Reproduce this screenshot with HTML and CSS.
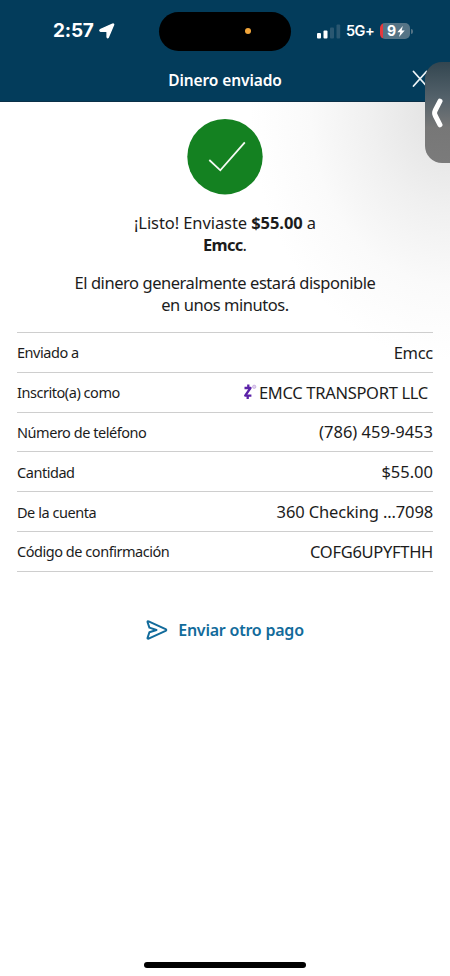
FILE: index.html
```html
<!DOCTYPE html>
<html lang="es">
<head>
<meta charset="utf-8">
<meta name="viewport" content="width=device-width, initial-scale=1">
<title>Dinero enviado</title>
<link rel="stylesheet" href="styles.css">
</head>
<body>
<div class="screen">
  <header class="top">
    <div class="status">
      <div class="clock"><span class="time">2:57</span>
        <svg class="location" width="16" height="16" viewBox="0 0 16 16"><path d="M1.3 6.6 13.6 1.1q1.4-.4.9 1L9.3 14.3q-.8 1-1.2-.2V9.2q0-.9-.9-.9H1.8Q.2 7.9 1.3 6.6Z" fill="#fff" stroke="#fff" stroke-width="1.4" stroke-linejoin="round"/></svg>
      </div>
      <div class="island"><i class="dot"></i></div>
      <div class="signal">
        <svg class="bars" width="24" height="15" viewBox="0 0 24 15"><rect x="0" y="9" width="4" height="5.5" rx="1" fill="#fff"/><rect x="6.5" y="6.5" width="4" height="8" rx="1" fill="#fff"/><rect x="13" y="3.5" width="4" height="11" rx="1" fill="#2a5771"/><rect x="19.5" y=".5" width="3.7" height="14" rx="1" fill="#2a5771"/></svg>
        <span class="network">5G+</span>
        <div class="battery"><span>9</span><svg width="8" height="11" viewBox="0 0 8 11"><path d="M5.8 0 .3 6.2h3L2 11l5.7-6.5h-3Z" fill="#fff"/></svg></div>
        <i class="cap"></i>
      </div>
    </div>
    <div class="titlebar">
      <h1>Dinero enviado</h1>
      <svg class="close" width="16" height="18" viewBox="0 0 16 18"><path d="m1.5 1.5 13 14.5M14.5 1.5 1.5 16" stroke="#eef4f7" stroke-width="1.8" stroke-linecap="round"/></svg>
    </div>
  </header>
  <main>
    <svg class="success" width="76" height="76" viewBox="0 0 76 76"><circle cx="38" cy="37.7" r="37.7" fill="#148121"/><path d="m22.3 41 11 10.3L57.8 23.3" fill="none" stroke="#f4faf4" stroke-width="1.8"/></svg>
    <p class="lead">¡Listo! Enviaste <b>$55.00</b> a<br><b class="name">Emcc</b>.</p>
    <p class="note"><span>El dinero generalmente estará disponible</span><br>en unos minutos.</p>
    <dl class="details">
      <div><dt>Enviado a</dt><dd>Emcc</dd></div>
      <div><dt>Inscrito(a) como</dt><dd class="registered"><svg class="zelle" width="15" height="16" viewBox="0 0 15 16"><path d="M5.3.6v3M4.7 12v3M1.5 4h6L2.2 11.6h6.2" fill="none" stroke="#5b22a8" stroke-width="2.3" stroke-linejoin="round"/><circle cx="11.2" cy="2.8" r="1.7" fill="#e0d0ef" stroke="#b899d9" stroke-width=".6"/></svg><span class="company">EMCC TRANSPORT LLC</span></dd></div>
      <div><dt>Número de teléfono</dt><dd class="figure">(786) 459-9453</dd></div>
      <div><dt>Cantidad</dt><dd class="figure">$55.00</dd></div>
      <div><dt>De la cuenta</dt><dd class="account">360 Checking ...7098</dd></div>
      <div><dt>Código de confirmación</dt><dd class="code">COFG6UPYFTHH</dd></div>
    </dl>
    <a class="again"><svg width="22" height="20" viewBox="0 0 22 20"><path d="M1.6 2.2Q1.3.9 2.6 1.4L19.6 9.2q1.4.8 0 1.6L2.6 18.6q-1.3.5-1-.9L3.4 12.2 10.5 10 3.4 7.6Z" fill="none" stroke="#126b9b" stroke-width="2" stroke-linejoin="round"/></svg><span>Enviar otro pago</span></a>
  </main>
  <div class="home"></div>
  <div class="side-tab"><svg width="12" height="30" viewBox="0 0 12 30"><path d="M9 3.2 4.2 12.5Q3 15 4.2 17.5L9 26.8" fill="none" stroke="#fff" stroke-width="5" stroke-linecap="round" stroke-linejoin="round"/></svg></div>
</div>
</body>
</html>
```
FILE: styles.css
```css
* { box-sizing: border-box; }
body { margin: 0; background: #fff; color: #1c1c1c; font-family: "Noto Sans", sans-serif; }
.screen { position: relative; width: 450px; height: 976px; overflow: hidden; display: flex; flex-direction: column; background: radial-gradient(ellipse 200px 250px at 450px 110px, #e0e0e0, #f0f0f0 40%, #fafafa 70%, #fff 100%); }
.top { height: 102px; background: #033c5b; color: #fff; border-bottom: 1px solid #0a3048; }
.status { height: 62px; display: grid; grid-template-columns: 159px 132px 159px; align-items: center; }
.clock { display: flex; align-items: center; gap: 5px; padding-left: 53px; }
.time { font: 700 19px/22px Inter, sans-serif; width: 41px; letter-spacing: -.2px; white-space: nowrap; }
.island { height: 39px; border-radius: 20px; background: #000; display: flex; align-items: center; justify-content: flex-end; padding-right: 40px; }
.dot { width: 6px; height: 6px; border-radius: 50%; background: #f2a63b; }
.signal { display: flex; align-items: center; padding-left: 26px; }
.bars { margin-right: 5px; }
.network { font: 600 14.5px/18px Inter, sans-serif; width: 28px; letter-spacing: -.5px; }
.battery { width: 30px; height: 16px; margin-left: 6px; border-radius: 5px; background: linear-gradient(90deg, #e5383d 3px, #557486 3px); display: flex; align-items: center; justify-content: center; gap: 1px; padding-left: 2px; font: 700 14px/16px Inter, sans-serif; }
.cap { width: 2px; height: 5px; margin-left: 1px; border-radius: 0 2px 2px 0; background: #557486; }
.titlebar { height: 34px; display: grid; grid-template-columns: 1fr 38px; align-items: center; padding-left: 38px; }
h1 { margin: 0; padding-top: 1px; text-align: center; font-size: 15.5px; line-height: 22px; font-weight: 600; letter-spacing: -.1px; }
main { flex: 1; display: flex; flex-direction: column; align-items: center; padding-top: 17px; }
.success { display: block; }
p { margin: 0; text-align: center; font-size: 16.5px; line-height: 22px; letter-spacing: -.08px; }
.lead { margin-top: 17px; }
.name { letter-spacing: -.7px; }
.note { margin-top: 16px; letter-spacing: -.45px; }
.details { width: 416px; margin: 16px 0 0; border-top: 1px solid #cecece; }
.details div { height: 39.8px; display: flex; align-items: center; justify-content: space-between; border-bottom: 1px solid #cecece; }
dt { font-size: 14.5px; letter-spacing: -.46px; }
dd { margin: 0; font-size: 16.5px; letter-spacing: -.3px; }
.figure { letter-spacing: 0; }
.account { letter-spacing: -.14px; }
.registered { display: flex; align-items: center; gap: 1px; padding-right: 5px; }
.again { margin-top: 46px; display: flex; align-items: center; gap: 10px; color: #126b9b; font-size: 16px; line-height: 24px; font-weight: 600; letter-spacing: -.22px; }
.home { width: 162px; height: 5.5px; border-radius: 3px; background: #000; margin: 0 auto 8.5px; }
.side-tab { position: absolute; top: 62px; right: 0; width: 25px; height: 101px; border-radius: 17px 0 0 17px; background: linear-gradient(#334650, #53616a 35%, #777 65%, #7b7b7b); display: flex; align-items: center; padding-left: 6px; }
```
